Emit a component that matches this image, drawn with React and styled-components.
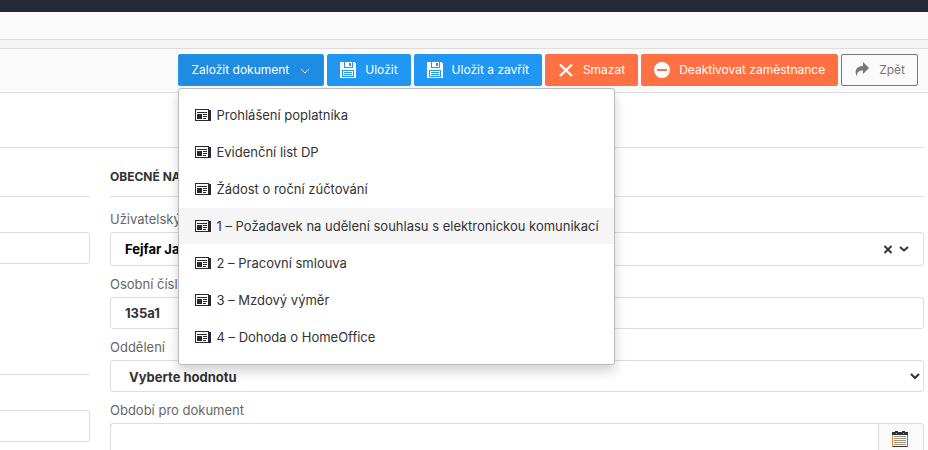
import React from 'react';
import styled, { createGlobalStyle, css } from 'styled-components';

const GlobalStyle = createGlobalStyle`
    *, *::before, *::after {
        box-sizing: border-box;
    }

    body {
        margin: 0;
        background: #fff;
        color: #333;
        font: 13px/20px Inter, "Liberation Sans", sans-serif;
    }

    button, input, select {
        margin: 0;
        font: inherit;
        color: inherit;
    }
`;

const Page = styled.div`
    height: 100vh;
    overflow: hidden;
`;

const Navbar = styled.header`
    height: 12px;
    background: #252b36;
`;

const Breadcrumb = styled.div`
    height: 28px;
    background: #fafafa;
    border-bottom: 1px solid #ddd;
`;

const Toolbar = styled.div`
    display: flex;
    justify-content: flex-end;
    gap: 3px;
    margin-top: 8px;
    padding: 5px 10px 6px;
    background: #fafafa;
    border-top: 1px solid #ddd;
    border-bottom: 1px solid #ddd;
`;

const Band = styled.div`
    background: #f5f5f5;
    display: flow-root;
`;

const variants = {
    primary: css`
        background: #2196f3;
        border-color: #2196f3;
        color: #fff;
    `,
    active: css`
        gap: 10px;
        background: #1f8be1;
        border-color: #2196f3;
        color: #fff;
    `,
    danger: css`
        background: #ff7043;
        border-color: #ff7043;
        color: #fff;
    `,
    outline: css`
        background: #fafafa;
        border-color: #777;
        color: #777;
    `,
};

const Button = styled.button`
    display: flex;
    align-items: center;
    gap: 9px;
    height: 32px;
    padding: 0 12px;
    border: 1px solid;
    border-radius: 2px;
    font-size: 12px;
    line-height: 20px;
    white-space: nowrap;
    cursor: pointer;
    ${({ $variant }) => variants[$variant]}
`;

const Icon = styled.svg`
    display: block;
    flex: none;
    width: 16px;
    height: 16px;
`;

const Caret = styled(Icon)`
    width: 12px;
    height: 12px;
`;

const SmallIcon = styled(Icon)`
    width: 10px;
    height: 10px;
`;

const Dropdown = styled.div`
    position: relative;
`;

const Menu = styled.ul`
    position: absolute;
    z-index: 10;
    top: 34px;
    left: 0;
    margin: 0;
    padding: 8px 0;
    list-style: none;
    background: #fff;
    border: 1px solid #bbb;
    border-radius: 3px;
    box-shadow: 0 6px 12px rgba(0, 0, 0, 0.18);
`;

const MenuItem = styled.li`
    margin-bottom: 1px;
`;

const MenuLink = styled.a`
    display: flex;
    align-items: center;
    gap: 5px;
    padding: 8px 15px 8px 16px;
    color: #333;
    text-decoration: none;
    white-space: nowrap;
    background: ${({ $hovered }) => ($hovered ? '#f5f5f5' : 'transparent')};
`;

const Tabs = styled.div`
    height: 55px;
    margin-right: 4px;
    border-bottom: 1px solid #ddd;
`;

const Columns = styled.main`
    display: grid;
    grid-template-columns: 90px 1fr;
    gap: 20px;
    padding: 18px 4px 0 0;
`;

const Legend = styled.h2`
    height: 31px;
    margin: 0 0 12px;
    padding-top: 1px;
    border-bottom: 1px solid #ddd;
    font-size: 12px;
    line-height: 20px;
    font-weight: 700;
    text-transform: uppercase;
    white-space: nowrap;
`;

const Field = styled.div`
    display: flex;
    flex-direction: column;
    margin-bottom: 8px;
`;

const Label = styled.label`
    height: 20px;
    margin-bottom: 3px;
    color: #666;
`;

const control = css`
    width: 100%;
    height: 32px;
    border: 1px solid #ddd;
    border-radius: 3px;
    background: #fff;
    font-weight: 700;
`;

const Input = styled.input`
    ${control}
    padding: 0 14px;
`;

const Select = styled.select`
    ${control}
    padding: 2px 0 0 14px;
`;

const LeftInput = styled(Input)`
    border-left: 0;
    border-radius: 0 3px 3px 0;
`;

const LeftField = styled.div`
    margin: 35px 0 110px;
`;

const LeftRule = styled.div`
    margin-top: ${({ $top }) => $top}px;
    border-bottom: 1px solid #ddd;
`;

const Combo = styled.div`
    ${control}
    display: flex;
    align-items: center;
    gap: 6px;
    height: 34px;
    padding: 0 14px;
`;

const ComboInput = styled.input`
    flex: 1;
    min-width: 0;
    padding: 0;
    border: 0;
    outline: 0;
    color: #000;
    font-weight: 700;
`;

const ComboButton = styled.button`
    padding: 0;
    border: 0;
    background: none;
`;

const InputGroup = styled.div`
    display: flex;

    ${Input} {
        flex: 1;
        border-right: 0;
        border-radius: 3px 0 0 3px;
    }
`;

const Addon = styled.button`
    display: flex;
    align-items: center;
    justify-content: center;
    width: 46px;
    height: 32px;
    padding: 0 2px 0 0;
    background: #fafafa;
    border: 1px solid #ddd;
    border-radius: 0 3px 3px 0;
`;

const FloppyIcon = () => (
    <Icon viewBox="0 0 16 16" fill="currentColor" fillRule="evenodd" aria-hidden="true">
        <path d="M0 0h14.5L16 1.500V16H0zM4 0v6h9V0h-1v5H5V0zM9 1v3h2V1zM2 8v7h12V8zM3 9h10v5H3z" />
        <path d="M4 10h8v1H4zM4 12h8v1H4z" fill="#2196f3" />
    </Icon>
);

const CrossIcon = () => (
    <Icon viewBox="0 0 16 16" fill="none" stroke="currentColor" strokeWidth="2.400" aria-hidden="true">
        <path d="M2 2.500l12 11.500M14 2.500L2 14" />
    </Icon>
);

const MinusIcon = () => (
    <Icon viewBox="0 0 16 16" fill="currentColor" fillRule="evenodd" aria-hidden="true">
        <path d="M8 0a8 8 0 1 0 0 16A8 8 0 0 0 8 0zM3 7v2h10V7z" />
    </Icon>
);

const ForwardIcon = () => (
    <Icon viewBox="0 0 16 16" fill="currentColor" aria-hidden="true">
        <path d="M9 0l6 6-6 6V8.500C5 8.500 2.500 10 3 15 0 9 2 4 9 4z" />
    </Icon>
);

const NewspaperIcon = () => (
    <Icon viewBox="0 0 16 16" fill="#2d2830" shapeRendering="crispEdges" aria-hidden="true">
        <path d="M14 3V2H0v12h15.500v-1h.5V3zM13 13H1V3h12zM2 5h10v1H2zM8 7h4v1H8zM8 9h4v1H8zM8 11h3v1H8zM2 7h5v5H2z" />
    </Icon>
);

const CalendarIcon = () => (
    <Icon viewBox="0 0 16 16" shapeRendering="crispEdges" aria-hidden="true">
        <path d="M0 1h3V0h3v1h4V0h3v1h3v3H0z" fill="#333" />
        <path d="M4 2h1v1H4zM11 2h1v1h-1z" fill="#999" />
        <path d="M0 4h16v12H0z" fill="#fafafa" />
        <path d="M0 4h1v12H0z" fill="#d08a4a" />
        <path d="M15 4h1v12h-1z" fill="#4a7fb5" />
        <path d="M1 15h14v1H1z" fill="#333" />
        <path d="M2 5.500h12M2 7.500h12M2 9.500h12M2 11.500h12M2 13.500h12" stroke="#b98f68" />
        <path d="M3 5.500h12M3 7.500h12M3 9.500h12M3 11.500h12M3 13.500h12" stroke="#8299b3" strokeDasharray="1 2" />
    </Icon>
);

const DOCUMENTS = [
    'Prohlášení poplatníka',
    'Evidenční list DP',
    'Žádost o roční zúčtování',
    '1 – Požadavek na udělení souhlasu s elektronickou komunikací',
    '2 – Pracovní smlouva',
    '3 – Mzdový výměr',
    '4 – Dohoda o HomeOffice',
];

const HOVERED = 3;

/**
 * Dropdown with the documents that can be created for the employee.
 */
const DocumentDropdown = () => (
    <Dropdown>
        <Button type="button" $variant="active" aria-haspopup="true" aria-expanded="true">
            Založit dokument
            <Caret viewBox="0 0 12 12" fill="none" stroke="currentColor" aria-hidden="true">
                <path d="M2 5l4 4 4-4" />
            </Caret>
        </Button>
        <Menu>
            {DOCUMENTS.map((name, i) => (
                <MenuItem key={name}>
                    <MenuLink href="#" $hovered={i === HOVERED}>
                        <NewspaperIcon />
                        {name}
                    </MenuLink>
                </MenuItem>
            ))}
        </Menu>
    </Dropdown>
);

const App = () => (
    <Page>
        <GlobalStyle />
        <Navbar />
        <Band>
            <Breadcrumb />
            <Toolbar>
                <DocumentDropdown />
                <Button type="button" $variant="primary"><FloppyIcon />Uložit</Button>
                <Button type="button" $variant="primary"><FloppyIcon />Uložit a zavřít</Button>
                <Button type="button" $variant="danger"><CrossIcon />Smazat</Button>
                <Button type="button" $variant="danger"><MinusIcon />Deaktivovat zaměstnance</Button>
                <Button type="button" $variant="outline"><ForwardIcon />Zpět</Button>
            </Toolbar>
        </Band>
        <Tabs />
        <Columns>
            <div>
                <LeftRule $top={30} />
                <LeftField><LeftInput aria-label="Titul" /></LeftField>
                <LeftRule $top={0} />
                <LeftField><LeftInput aria-label="Ulice" /></LeftField>
            </div>
            <div>
                <Legend>Obecné nastavení</Legend>
                <Field>
                    <Label htmlFor="user">Uživatelský účet</Label>
                    <Combo>
                        <ComboInput id="user" defaultValue="Fejfar Jan" />
                        <ComboButton type="button" aria-label="Vymazat">
                            <SmallIcon viewBox="0 0 10 10" fill="none" stroke="#333" strokeWidth="2">
                                <path d="M1.500 2l7 7M8.500 2l-7 7" />
                            </SmallIcon>
                        </ComboButton>
                        <ComboButton type="button" aria-label="Otevřít">
                            <SmallIcon viewBox="0 0 10 10" fill="none" stroke="#333" strokeWidth="2">
                                <path d="M1 3l4 3.500L9 3" />
                            </SmallIcon>
                        </ComboButton>
                    </Combo>
                </Field>
                <Field>
                    <Label htmlFor="number">Osobní číslo</Label>
                    <Input id="number" defaultValue="135a1" />
                </Field>
                <Field>
                    <Label htmlFor="department">Oddělení</Label>
                    <Select id="department">
                        <option>Vyberte hodnotu</option>
                    </Select>
                </Field>
                <Field>
                    <Label htmlFor="period">Období pro dokument</Label>
                    <InputGroup>
                        <Input id="period" />
                        <Addon type="button" aria-label="Kalendář"><CalendarIcon /></Addon>
                    </InputGroup>
                </Field>
            </div>
        </Columns>
    </Page>
);

export default App;
